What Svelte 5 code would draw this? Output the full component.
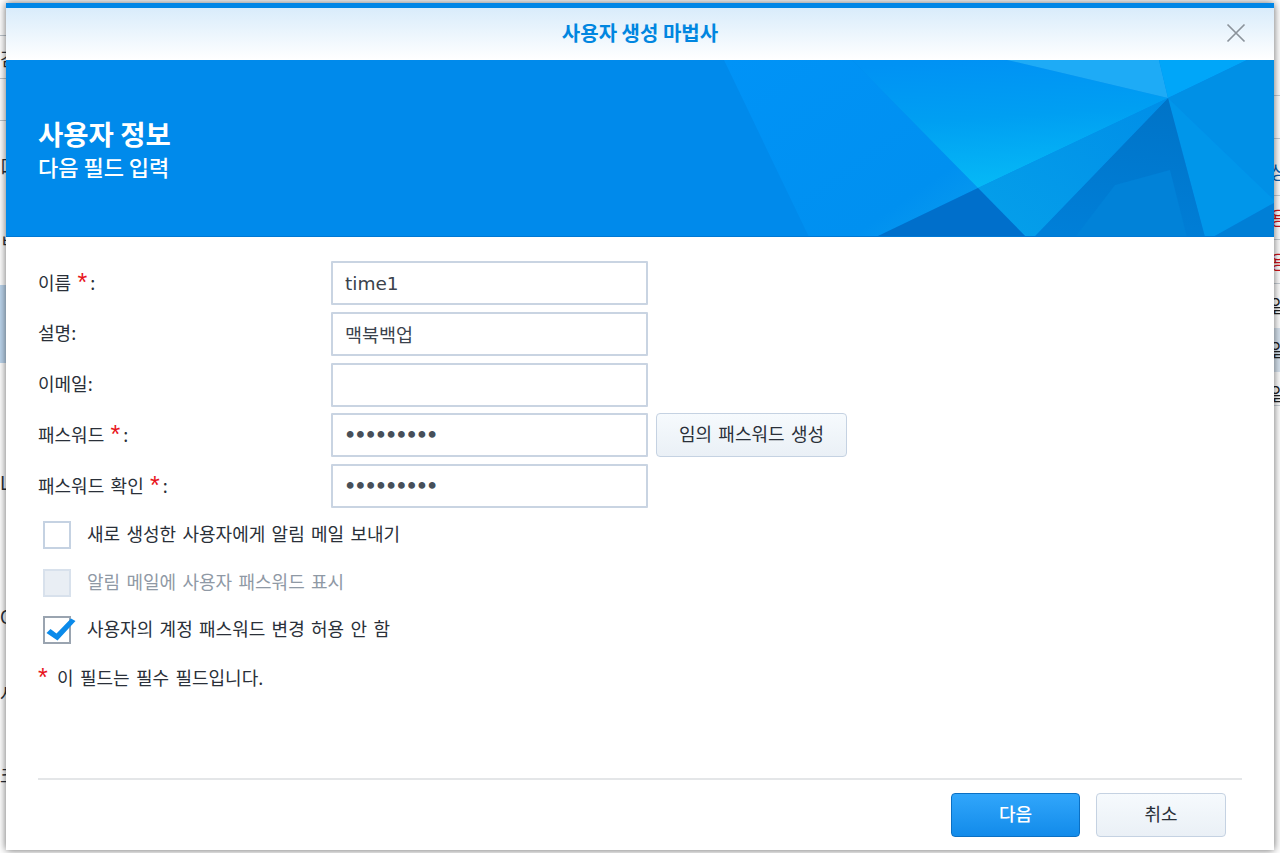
<script>
  const leftBits = [
    { t: "검", y: 48 },
    { t: "口", y: 155 },
    { t: "ㅂ", y: 230 },
    { t: "L", y: 472 },
    { t: "C", y: 606 },
    { t: "사", y: 683 },
    { t: "크", y: 765 }
  ];
  const rightBits = [
    { t: "상", y: 161, c: "#0a5fb0" },
    { t: "용", y: 207, c: "#d0111b" },
    { t: "용", y: 251, c: "#d0111b" },
    { t: "일", y: 295, c: "#222" },
    { t: "일", y: 339, c: "#222" },
    { t: "일", y: 383, c: "#222" }
  ];
  const fields = [
    { label: "이름", req: true, type: "text", value: "time1" },
    { label: "설명", type: "text", value: "맥북백업" },
    { label: "이메일", type: "text", value: "" },
    { label: "패스워드", req: true, type: "password", value: "123456789", gen: true },
    { label: "패스워드 확인", req: true, type: "password", value: "123456789" }
  ];
  const checks = [
    { label: "새로 생성한 사용자에게 알림 메일 보내기" },
    { label: "알림 메일에 사용자 패스워드 표시", disabled: true },
    { label: "사용자의 계정 패스워드 변경 허용 안 함", checked: true }
  ];
</script>

<div class="desktop">
  <div class="line" style="top: 35px"></div>
  <div class="line" style="top: 78px"></div>
  <div class="line" style="top: 120px"></div>
  <div class="rowline" style="top: 95px"></div>
  <div class="rowline" style="top: 138px"></div>
  <div class="rowline" style="top: 195px"></div>
  <div class="rowline" style="top: 239px"></div>
  <div class="rowline" style="top: 283px"></div>
  <div class="rowline" style="top: 405px"></div>
  <div class="sel-left"></div>
  <div class="sel-right"></div>
  {#each leftBits as b}
    <span class="bit" style="left: 0; top: {b.y}px">{b.t}</span>
  {/each}
  {#each rightBits as b}
    <span class="bit" style="left: 1270px; top: {b.y}px; color: {b.c}">{b.t}</span>
  {/each}

  <div class="window">
    <header class="titlebar">
      <span class="title">사용자 생성 마법사</span>
      <svg class="close" width="20" height="20" viewBox="0 0 20 20">
        <path d="M1.5 1.5 L18.5 18.5 M18.5 1.5 L1.5 18.5" stroke="#8b939b" stroke-width="1.7" fill="none" />
      </svg>
    </header>

    <section class="banner">
      <svg class="facets" width="1268" height="177" viewBox="6 60 1268 177" preserveAspectRatio="none">
        <defs>
          <linearGradient id="glow" x1="0.35" y1="0" x2="0.5" y2="1">
            <stop offset="0" stop-color="#0092f4" />
            <stop offset="0.45" stop-color="#009ff2" />
            <stop offset="1" stop-color="#06baf6" />
          </linearGradient>
          <linearGradient id="lower" x1="0.9" y1="0" x2="0" y2="1">
            <stop offset="0" stop-color="#008fe8" />
            <stop offset="1" stop-color="#05a0ea" />
          </linearGradient>
          <linearGradient id="dark" x1="0.5" y1="0" x2="0.3" y2="1">
            <stop offset="0" stop-color="#0074c8" />
            <stop offset="1" stop-color="#007fd8" />
          </linearGradient>
          <linearGradient id="mid" x1="0" y1="0" x2="1" y2="1">
            <stop offset="0" stop-color="#0093f7" />
            <stop offset="0.75" stop-color="#0090f0" />
            <stop offset="1" stop-color="#0a9eee" />
          </linearGradient>
        </defs>
        <rect x="6" y="60" width="1268" height="177" fill="#008aeb" />
        <polygon points="724,60 852,60 978,188 876,237 809,237" fill="url(#mid)" />
        <polygon points="852,60 1007,60 1168,98 978,188" fill="url(#glow)" />
        <polygon points="1007,60 1159,60 1168,98" fill="#1eabf6" />
        <polygon points="1159,60 1247,60 1168,98" fill="#00a6f9" />
        <polygon points="1247,60 1274,60 1274,200 1168,98" fill="#0090e6" />
        <polygon points="1168,98 1274,200 1274,203 1213,237 1205,237" fill="#0096ea" />
        <polygon points="1274,203 1274,237 1213,237" fill="#007fd6" />
        <polygon points="1168,98 1205,237 1034,237" fill="url(#dark)" />
        <polygon points="1115,185 1170,170 1187,237 1075,237" fill="#0182d8" />
        <polygon points="978,188 1168,98 1034,237 1026,237" fill="url(#lower)" />
        <polygon points="978,188 1026,237 876,237" fill="#006fcb" />
      </svg>
      <h1>사용자 정보</h1>
      <p>다음 필드 입력</p>
    </section>

    <form class="form">
      <div class="fields">
        {#each fields as f}
          <div class="field">
            <span class="label">{f.label}{#if f.req}&nbsp;<span class="star">*</span>{/if}:</span>
            <input class="input" class:secret={f.type === "password"} type={f.type} value={f.value} />
            {#if f.gen}
              <button type="button" class="btn gen">임의 패스워드 생성</button>
            {/if}
          </div>
        {/each}
      </div>

      <div class="checks">
        {#each checks as c}
          <div class="check" class:disabled={c.disabled}>
            <span class="box" class:on={c.checked}>
              {#if c.checked}
                <svg class="tick" width="32" height="28" viewBox="0 0 32 28">
                  <path d="M1.5 19 L5.5 15 L11.5 19.5 L26 4.5 L30.5 7 L12.5 26.5 Z" fill="#0a8aea" />
                </svg>
              {/if}
            </span>
            <span class="text">{c.label}</span>
          </div>
        {/each}
      </div>

      <p class="note"><span class="star">*</span> 이 필드는 필수 필드입니다.</p>
    </form>

    <footer class="footer">
      <button type="button" class="btn primary">다음</button>
      <button type="button" class="btn cancel">취소</button>
    </footer>
  </div>
</div>

<style>
  :global(body) {
    margin: 0;
    background: #fff;
    overflow: hidden;
  }
  .desktop {
    position: relative;
    width: 1280px;
    height: 853px;
    overflow: hidden;
    background: #fff;
    font-family: "Noto Sans CJK KR", "Liberation Sans", sans-serif;
    color: #2a3039;
  }
  .line {
    position: absolute;
    left: 0;
    width: 6px;
    height: 1px;
    background: #bcc4cc;
  }
  .rowline {
    position: absolute;
    left: 1274px;
    width: 6px;
    height: 1px;
    background: #c8cfd6;
  }
  .sel-left {
    position: absolute;
    left: 0;
    top: 285px;
    width: 6px;
    height: 78px;
    background: #bdd6ee;
  }
  .sel-right {
    position: absolute;
    left: 1274px;
    top: 328px;
    width: 6px;
    height: 44px;
    background: #d8e4f0;
  }
  .bit {
    position: absolute;
    font-size: 18px;
    line-height: 20px;
  }
  .window {
    position: absolute;
    left: 6px;
    top: 3px;
    width: 1268px;
    height: 847px;
    display: flex;
    flex-direction: column;
    background: #fff;
    border-top: 5px solid #0086e6;
    box-sizing: border-box;
    box-shadow: 0 0 8px rgba(0, 0, 0, 0.6);
  }
  .titlebar {
    height: 52px;
    flex: none;
    position: relative;
    display: flex;
    align-items: center;
    justify-content: center;
    background: linear-gradient(#d9ecfb, #ffffff);
  }
  .title {
    font-size: 20px;
    line-height: 24px;
    margin-top: -2px;
    font-weight: 700;
    color: #0086e0;
  }
  .close {
    position: absolute;
    right: 28px;
    top: 15px;
  }
  .banner {
    height: 177px;
    flex: none;
    position: relative;
    box-sizing: border-box;
    padding: 55px 32px 0;
    color: #fff;
    overflow: hidden;
    border-bottom: 1px solid #0078d4;
  }
  .facets {
    position: absolute;
    left: 0;
    top: 0;
  }
  .banner h1 {
    position: relative;
    margin: 0;
    font-size: 27.5px;
    line-height: 36px;
    font-weight: 700;
  }
  .banner p {
    position: relative;
    margin: 0;
    font-size: 22px;
    line-height: 30px;
    font-weight: 500;
  }
  .form {
    flex: 1;
    box-sizing: border-box;
    padding: 24px 32px 0;
    font-size: 18px;
    word-spacing: 2.3px;
  }
  .fields {
    display: flex;
    flex-direction: column;
    gap: 6.75px;
  }
  .field {
    display: flex;
    align-items: center;
    height: 44px;
  }
  .label {
    width: 293px;
    flex: none;
    line-height: 24px;
    margin-top: -3px;
  }
  .star {
    color: #e8141c;
    font-family: "Liberation Sans", sans-serif;
    font-size: 25px;
    line-height: 0;
    margin-right: 3px;
    position: relative;
    top: 1px;
  }
  .input {
    width: 317px;
    height: 44px;
    box-sizing: border-box;
    border: 2px solid #c9d4e2;
    border-radius: 1px;
    padding: 0 12px;
    font-family: "DejaVu Sans", "Noto Sans CJK KR", sans-serif;
    font-size: 18.5px;
    color: #3a424c;
    outline: none;
    background: #fff;
  }
  .input.secret {
    font-size: 17.4px;
    color: #474f59;
    -webkit-text-stroke: 1.6px #474f59;
  }
  .btn {
    height: 44px;
    box-sizing: border-box;
    border-radius: 4px;
    font-family: inherit;
    font-size: 18px;
    word-spacing: 2.3px;
    color: #2a3039;
    border: 1px solid #c5d2e2;
    background: linear-gradient(#f6fafd, #eaf0f6);
    padding: 0 0 4px;
  }
  .gen {
    width: 191px;
    margin-left: 8px;
  }
  .checks {
    margin-top: 13px;
    padding-left: 5px;
    display: flex;
    flex-direction: column;
    gap: 19.5px;
  }
  .check {
    display: flex;
    align-items: center;
    height: 28px;
    gap: 16px;
    color: #2a3039;
  }
  .check .text {
    margin-top: -4px;
  }
  .check.disabled {
    color: #8f99a5;
  }
  .box {
    width: 28px;
    height: 28px;
    box-sizing: border-box;
    border: 2px solid #c5d2e2;
    position: relative;
    background: #fff;
  }
  .disabled .box {
    background: #e9eef4;
    border-color: #d8e1ec;
  }
  .box.on {
    border-color: #9aa4b0;
  }
  .tick {
    position: absolute;
    left: 0;
    top: -4px;
  }
  .note {
    margin: 19px 0 0;
    line-height: 28px;
  }
  .footer {
    flex: none;
    margin: 0 32px;
    height: 72px;
    box-sizing: border-box;
    border-top: 2px solid #e4e6e8;
    display: flex;
    justify-content: flex-end;
    gap: 16px;
    padding: 13px 16px 0 0;
  }
  .primary,
  .cancel {
    width: 130px;
  }
  .primary {
    width: 129px;
    background: linear-gradient(#31a6fb, #128bea);
    border-color: #0a70c4;
    color: #fff;
    font-weight: 500;
  }
</style>
